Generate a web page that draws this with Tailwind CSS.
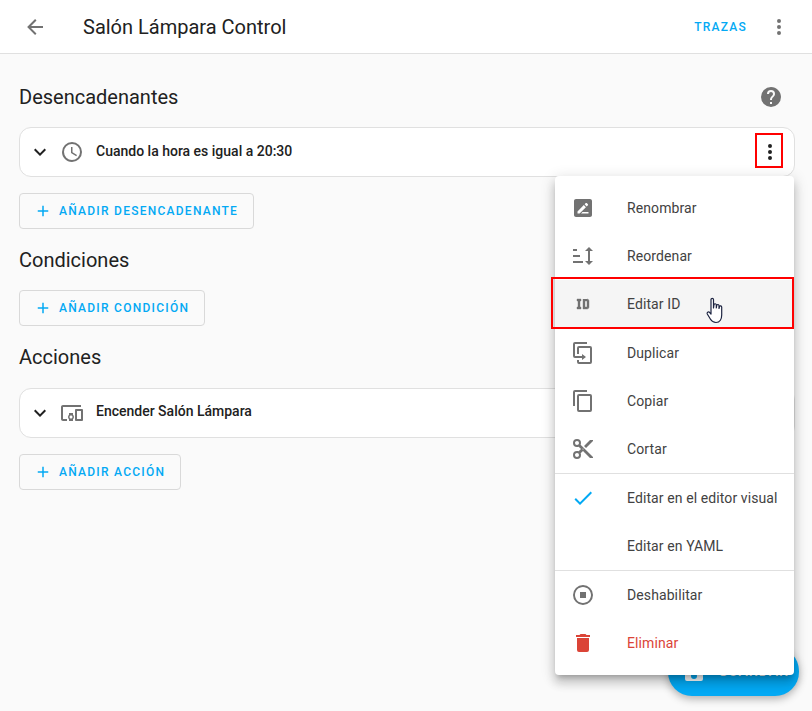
<!DOCTYPE html>
<html lang="es">
<head>
    <meta charset="UTF-8">
    <title>Salón Lámpara Control</title>
    <script src="https://cdn.jsdelivr.net/npm/@tailwindcss/browser@4"></script>
</head>
<body class="bg-[#fafafa] text-[#212121] font-['Roboto',sans-serif] overflow-hidden">
<div class="relative w-[812px] h-[711px] overflow-hidden">

    <!-- Header -->
    <header class="flex items-center h-[54px] bg-white border-b border-[#e0e0e0] pl-[23px] pr-[21px]">
        <svg class="w-6 h-6 fill-[#727272]" viewBox="0 0 24 24"><path d="M20,11V13H8L13.5,18.5L12.08,19.92L4.16,12L12.08,4.08L13.5,5.5L8,11H20Z"/></svg>
        <h1 class="ml-9 text-[20px] leading-none">Salón Lámpara Control</h1>
        <span class="ml-auto text-[#03a9f4] text-[12px] font-medium tracking-[1.25px]">TRAZAS</span>
        <svg class="ml-[20px] w-6 h-6 fill-[#727272]" viewBox="0 0 24 24"><path d="M12,16A2,2 0 0,1 14,18A2,2 0 0,1 12,20A2,2 0 0,1 10,18A2,2 0 0,1 12,16M12,10A2,2 0 0,1 14,12A2,2 0 0,1 12,14A2,2 0 0,1 10,12A2,2 0 0,1 12,10M12,4A2,2 0 0,1 14,6A2,2 0 0,1 12,8A2,2 0 0,1 10,6A2,2 0 0,1 12,4Z"/></svg>
    </header>

    <main class="px-[19px] pr-[17px]">
        <!-- Desencadenantes -->
        <div class="flex items-center justify-between h-[32px] mt-[27px] pr-[12px]">
            <h2 class="text-[20px] leading-none">Desencadenantes</h2>
            <svg class="w-6 h-6 fill-[#727272]" viewBox="0 0 24 24"><path d="M15.07,11.25L14.17,12.17C13.45,12.89 13,13.5 13,15H11V14.5C11,13.39 11.45,12.39 12.17,11.67L13.41,10.41C13.78,10.05 14,9.55 14,9C14,7.89 13.1,7 12,7A2,2 0 0,0 10,9H8A4,4 0 0,1 12,5A4,4 0 0,1 16,9C16,9.88 15.64,10.67 15.07,11.25M13,19H11V17H13M12,2A10,10 0 0,0 2,12A10,10 0 0,0 12,22A10,10 0 0,0 22,12C22,6.47 17.5,2 12,2Z"/></svg>
        </div>
        <div class="flex items-center h-[50px] mt-[14px] bg-white border border-[#e0e0e0] rounded-xl pl-[8px] pr-[12px]">
            <svg class="w-6 h-6 fill-[#212121]" viewBox="0 0 24 24"><path d="M7.41,8.58L12,13.17L16.59,8.58L18,10L12,16L6,10L7.41,8.58Z"/></svg>
            <svg class="ml-[8px] w-6 h-6 fill-[#727272]" viewBox="0 0 24 24"><path d="M12,20A8,8 0 0,0 20,12A8,8 0 0,0 12,4A8,8 0 0,0 4,12A8,8 0 0,0 12,20M12,2A10,10 0 0,1 22,12A10,10 0 0,1 12,22C6.47,22 2,17.5 2,12A10,10 0 0,1 12,2M12.5,7V12.25L17,14.92L16.25,16.15L11,13V7H12.5Z"/></svg>
            <span class="ml-[12px] pb-[2px] text-[14px] font-medium">Cuando la hora es igual a 20:30</span>
            <svg class="ml-auto w-6 h-6 fill-[#212121]" viewBox="0 0 24 24"><path d="M12,16A2,2 0 0,1 14,18A2,2 0 0,1 12,20A2,2 0 0,1 10,18A2,2 0 0,1 12,16M12,10A2,2 0 0,1 14,12A2,2 0 0,1 12,14A2,2 0 0,1 10,12A2,2 0 0,1 12,10M12,4A2,2 0 0,1 14,6A2,2 0 0,1 12,8A2,2 0 0,1 10,6A2,2 0 0,1 12,4Z"/></svg>
        </div>
        <button class="flex items-center h-9 mt-[16px] w-[235px] bg-transparent border border-[#d9d9d9] rounded pl-[14px] text-[#03a9f4] text-[12px] font-medium tracking-[1.25px]">
            <svg class="w-[18px] h-[18px] fill-[#03a9f4]" viewBox="0 0 24 24"><path d="M19,13H13V19H11V13H5V11H11V5H13V11H19V13Z"/></svg>
            <span class="ml-[7px]">AÑADIR DESENCADENANTE</span>
        </button>

        <!-- Condiciones -->
        <h2 class="mt-[20px] text-[20px] leading-[22px]">Condiciones</h2>
        <button class="flex items-center h-9 mt-[19px] w-[186px] bg-transparent border border-[#d9d9d9] rounded pl-[14px] text-[#03a9f4] text-[12px] font-medium tracking-[1.25px]">
            <svg class="w-[18px] h-[18px] fill-[#03a9f4]" viewBox="0 0 24 24"><path d="M19,13H13V19H11V13H5V11H11V5H13V11H19V13Z"/></svg>
            <span class="ml-[7px]">AÑADIR CONDICIÓN</span>
        </button>

        <!-- Acciones -->
        <h2 class="mt-[20px] text-[20px] leading-[22px]">Acciones</h2>
        <div class="flex items-center h-[50px] mt-[20px] bg-white border border-[#e0e0e0] rounded-xl pl-[8px]">
            <svg class="w-6 h-6 fill-[#212121]" viewBox="0 0 24 24"><path d="M7.41,8.58L12,13.17L16.59,8.58L18,10L12,16L6,10L7.41,8.58Z"/></svg>
            <svg class="ml-[8px] w-6 h-6 fill-[#727272]" viewBox="0 0 24 24"><path d="M3 6H21V4H3C1.9 4 1 4.9 1 6V18C1 19.1 1.9 20 3 20H7V18H3V6M13 12H9V13.78C8.39 14.33 8 15.11 8 16C8 16.89 8.39 17.67 9 18.22V20H13V18.22C13.61 17.67 14 16.88 14 16S13.61 14.33 13 13.78V12M11 17.5C10.17 17.5 9.5 16.83 9.5 16S10.17 14.5 11 14.5 12.5 15.17 12.5 16 11.83 17.5 11 17.5M22 8H16C15.5 8 15 8.5 15 9V19C15 19.5 15.5 20 16 20H22C22.5 20 23 19.5 23 19V9C23 8.5 22.5 8 22 8M21 18H17V10H21V18Z"/></svg>
            <span class="ml-[12px] pb-[4px] text-[14px] font-medium">Encender Salón Lámpara</span>
        </div>
        <button class="flex items-center h-9 mt-[16px] w-[162px] bg-transparent border border-[#d9d9d9] rounded pl-[14px] text-[#03a9f4] text-[12px] font-medium tracking-[1.25px]">
            <svg class="w-[18px] h-[18px] fill-[#03a9f4]" viewBox="0 0 24 24"><path d="M19,13H13V19H11V13H5V11H11V5H13V11H19V13Z"/></svg>
            <span class="ml-[7px]">AÑADIR ACCIÓN</span>
        </button>
    </main>

    <!-- Guardar FAB, behind the menu -->
    <div class="absolute left-[668px] top-[647px] w-[131px] h-[49px] flex items-center pl-[14px] rounded-[24px] bg-[#03a9f4] text-white text-[14px] font-medium tracking-[1px] shadow-[0_3px_8px_rgba(0,0,0,0.3)]">
        <svg class="w-6 h-6 fill-white" viewBox="0 0 24 24"><path d="M15,9H5V5H15M12,19A3,3 0 0,1 9,16A3,3 0 0,1 12,13A3,3 0 0,1 15,16A3,3 0 0,1 12,19M17,3H5C3.89,3 3,3.9 3,5V19A2,2 0 0,0 5,21H19A2,2 0 0,0 21,19V7L17,3Z"/></svg>
        <span class="ml-[12px]">GUARDAR</span>
    </div>

    <!-- Red box round the row's overflow button -->
    <div class="absolute left-[755px] top-[133px] w-[28px] h-[35px] border-[2px] border-[#f00]"></div>

    <!-- Overflow menu -->
    <div class="absolute left-[555px] top-[176px] w-[239px] h-[499px] py-2 bg-white rounded text-[14px] tracking-[0.1px] text-[#424242] shadow-[0_5px_5px_-3px_rgba(0,0,0,0.2),0_8px_10px_1px_rgba(0,0,0,0.14),0_3px_14px_2px_rgba(0,0,0,0.12)]">
        <div class="flex items-center h-[48px] pl-4">
            <svg class="w-6 h-6 shrink-0 fill-[#727272]" viewBox="0 0 24 24"><path fill-rule="evenodd" d="M5 3H19C20.1 3 21 3.9 21 5V19C21 20.1 20.1 21 19 21H5C3.9 21 3 20.1 3 19V5C3 3.9 3.9 3 5 3M6.5 17.5H8.6L14.9 11.2L12.8 9.1L6.5 15.4V17.5M15.7 10.4L16.9 9.2C17.2 8.9 17.2 8.5 16.9 8.2L15.8 7.1C15.5 6.8 15.1 6.8 14.8 7.1L13.6 8.3L15.7 10.4M11.5 16L10 17.5H17.5V16H11.5Z"/></svg>
            <span class="ml-[32px]">Renombrar</span>
        </div>
        <div class="flex items-center h-[48px] pl-4">
            <svg class="w-6 h-6 shrink-0 fill-[#727272]" viewBox="0 0 24 24"><path d="M18 21L14 17H17V7H14L18 3L22 7H19V17H22M2 19V17H12V19M2 13V11H9V13M2 7V5H6V7H2Z"/></svg>
            <span class="ml-[32px]">Reordenar</span>
        </div>
        <div class="flex items-center h-[48px] pl-4 bg-[#f5f5f5]">
            <svg class="w-6 h-6 shrink-0 fill-[#727272] stroke-[#727272] stroke-[0.4]" viewBox="0 0 24 24"><path d="M10 7V9H9V15H10V17H6V15H7V9H6V7H10M16 7C17.11 7 18 7.9 18 9V15C18 16.11 17.11 17 16 17H12V7M16 9H14V15H16V9Z"/></svg>
            <span class="ml-[32px]">Editar ID</span>
        </div>
        <div class="flex items-center h-[48px] pt-[2px] pl-4">
            <svg class="w-6 h-6 shrink-0 fill-[#727272]" viewBox="0 0 24 24"><path d="M11,17H4A2,2 0 0,1 2,15V3A2,2 0 0,1 4,1H16V3H4V15H11V13L15,16L11,19V17M19,21V7H8V13H6V7A2,2 0 0,1 8,5H19A2,2 0 0,1 21,7V21A2,2 0 0,1 19,23H8A2,2 0 0,1 6,21V19H8V21H19Z"/></svg>
            <span class="ml-[32px]">Duplicar</span>
        </div>
        <div class="flex items-center h-[48px] pt-[2px] pl-4">
            <svg class="w-6 h-6 shrink-0 fill-[#727272]" viewBox="0 0 24 24"><path d="M19,21H8V7H19M19,5H8A2,2 0 0,0 6,7V21A2,2 0 0,0 8,23H19A2,2 0 0,0 21,21V7A2,2 0 0,0 19,5M16,1H4A2,2 0 0,0 2,3V17H4V3H16V1Z"/></svg>
            <span class="ml-[32px]">Copiar</span>
        </div>
        <div class="flex items-center h-[48px] pt-[2px] pl-4">
            <svg class="w-6 h-6 shrink-0 fill-[#727272]" viewBox="0 0 24 24"><path d="M19,3L13,9L15,11L22,4V3M12,12.5A0.5,0.5 0 0,1 11.5,12A0.5,0.5 0 0,1 12,11.5A0.5,0.5 0 0,1 12.5,12A0.5,0.5 0 0,1 12,12.5M6,20A2,2 0 0,1 4,18C4,16.89 4.9,16 6,16A2,2 0 0,1 8,18C8,19.11 7.1,20 6,20M6,8A2,2 0 0,1 4,6C4,4.89 4.9,4 6,4A2,2 0 0,1 8,6C8,7.11 7.1,8 6,8M9.64,7.64C9.87,7.14 10,6.59 10,6A4,4 0 0,0 6,2A4,4 0 0,0 2,6A4,4 0 0,0 6,10C6.59,10 7.14,9.87 7.64,9.64L10,12L7.64,14.36C7.14,14.13 6.59,14 6,14A4,4 0 0,0 2,18A4,4 0 0,0 6,22A4,4 0 0,0 10,18C10,17.41 9.87,16.86 9.64,16.36L12,14L19,21H22V20L9.64,7.64Z"/></svg>
            <span class="ml-[32px]">Cortar</span>
        </div>
        <div class="h-px mt-[1px] bg-[#e0e0e0]"></div>
        <div class="flex items-center h-[48px] pl-4">
            <svg class="w-6 h-6 shrink-0 fill-[#03a9f4]" viewBox="0 0 24 24"><path d="M21,7L9,19L3.5,13.5L4.91,12.09L9,16.17L19.59,5.59L21,7Z"/></svg>
            <span class="ml-[32px]">Editar en el editor visual</span>
        </div>
        <div class="flex items-center h-[48px] pl-[72px]">Editar en YAML</div>
        <div class="h-px bg-[#e0e0e0]"></div>
        <div class="flex items-center h-[48px] pl-4">
            <svg class="w-6 h-6 shrink-0 fill-[#727272]" viewBox="0 0 24 24"><path d="M12,2A10,10 0 0,0 2,12A10,10 0 0,0 12,22A10,10 0 0,0 22,12A10,10 0 0,0 12,2M12,4C16.41,4 20,7.59 20,12C20,16.41 16.41,20 12,20C7.59,20 4,16.41 4,12C4,7.59 7.59,4 12,4M9,9V15H15V9"/></svg>
            <span class="ml-[32px]">Deshabilitar</span>
        </div>
        <div class="flex items-center h-[48px] pl-4 text-[#db4437]">
            <svg class="w-6 h-6 shrink-0 fill-[#db4437]" viewBox="0 0 24 24"><path d="M19,4H15.5L14.5,3H9.5L8.5,4H5V6H19M6,19A2,2 0 0,0 8,21H16A2,2 0 0,0 18,19V7H6V19Z"/></svg>
            <span class="ml-[32px]">Eliminar</span>
        </div>
    </div>

    <!-- Red box round Editar ID -->
    <div class="absolute left-[551px] top-[277px] w-[243px] h-[52px] border-[2px] border-[#f00]"></div>

    <!-- Hand cursor -->
    <svg class="absolute left-[705px] top-[296px] w-[20px] h-[28px]" viewBox="0 0 20 28">
        <path d="M6 3.5C6 2 8.5 2 8.5 3.5V12L9 8.5C9.5 7.5 11 7.5 11.3 8.7V12L11.8 9.2C12.3 8.2 13.8 8.3 14 9.5V12.5L14.5 10.5C15 9.6 16.5 9.8 16.7 11V19C16.7 23 15 26.5 11 26.5C8 26.5 6.5 25 5.5 23.3L2.3 18C1.5 16.5 3.3 15.3 4.5 16.3L6 18Z" fill="#fff" stroke="#1c2340" stroke-width="1.2" stroke-linejoin="round"/>
    </svg>
</div>
</body>
</html>
